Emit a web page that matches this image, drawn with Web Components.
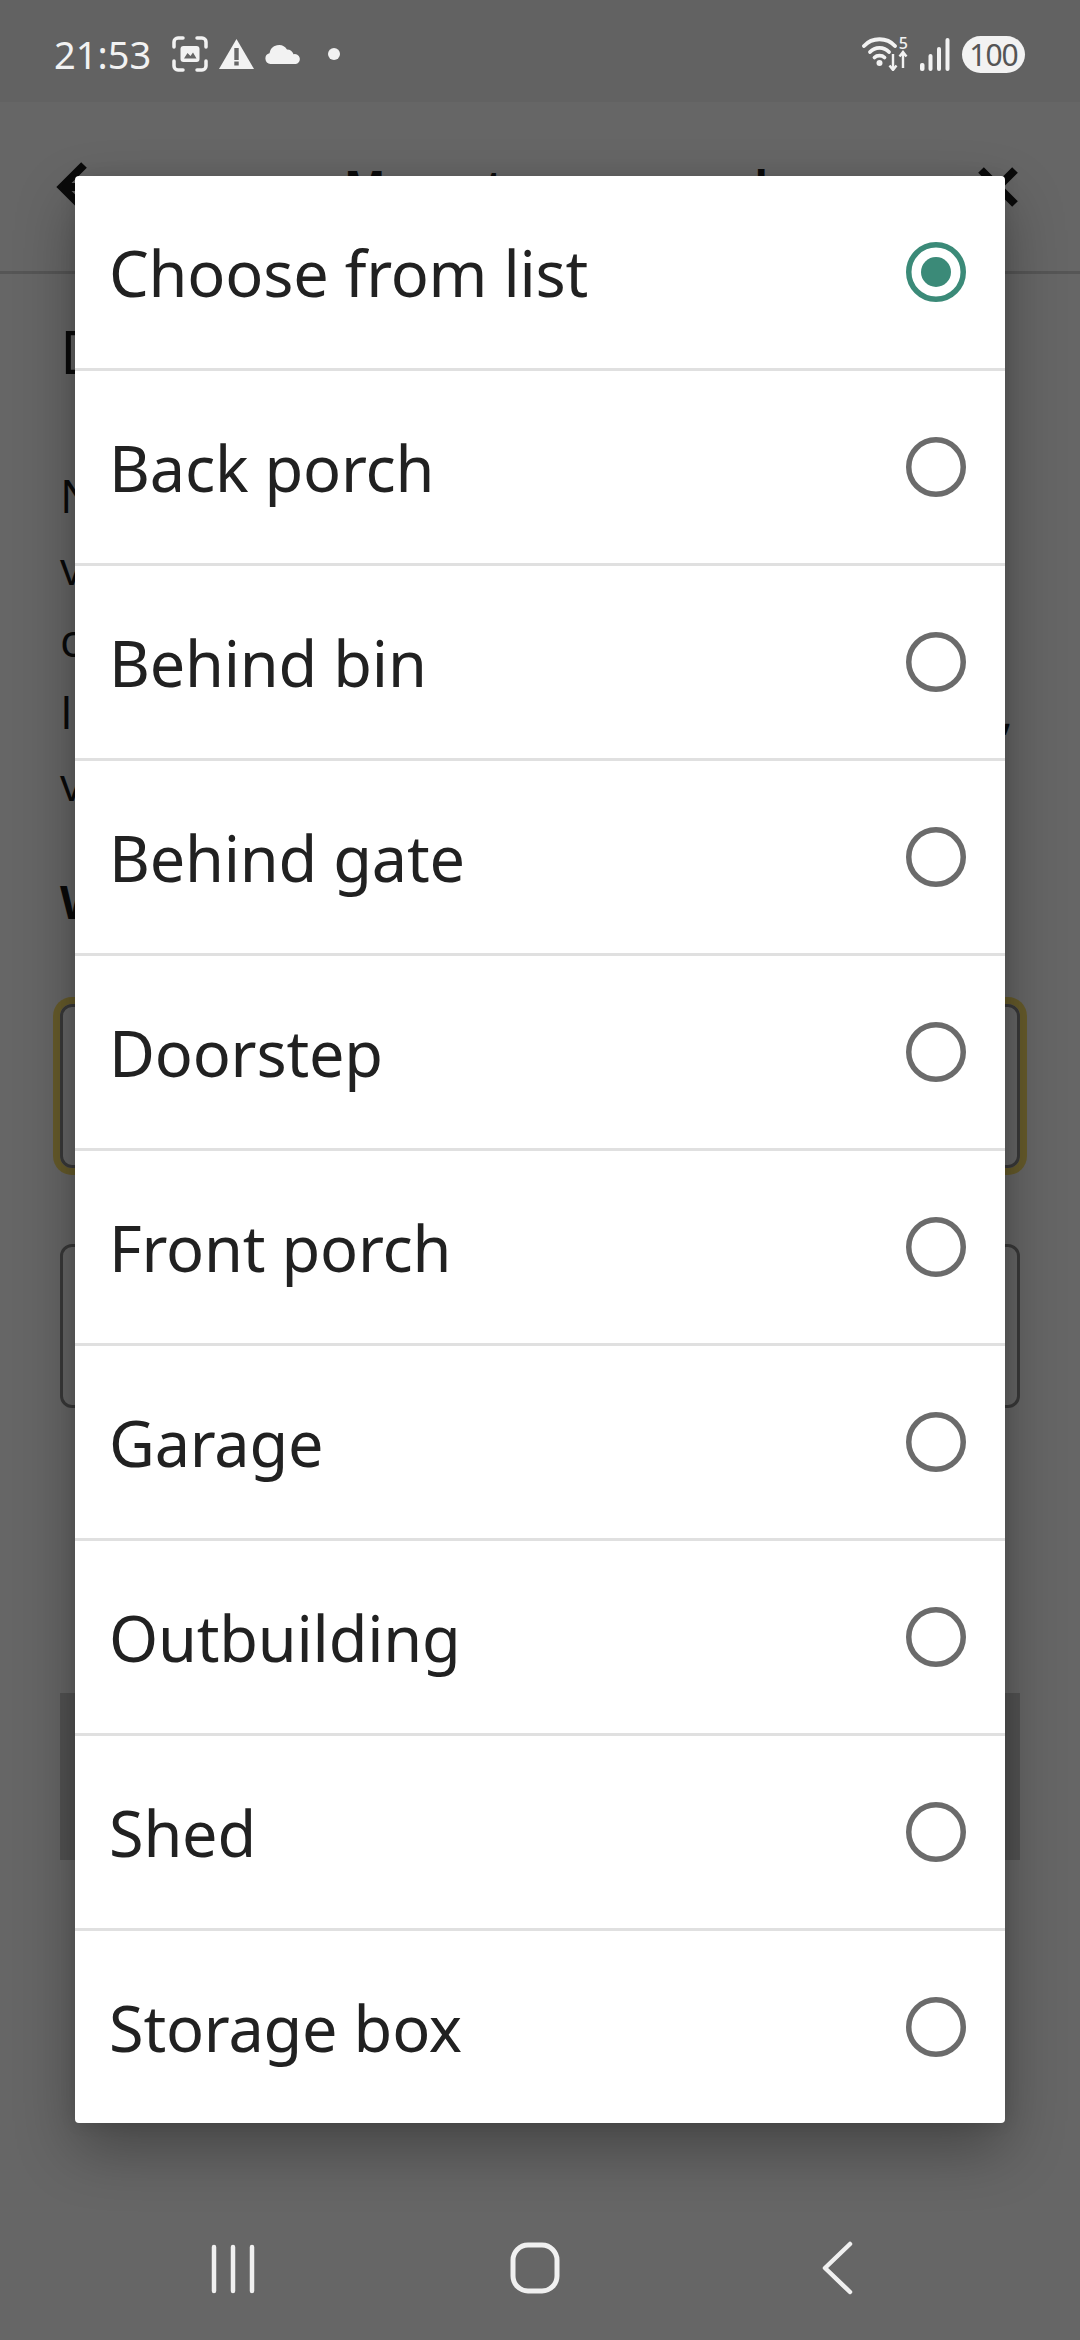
<!DOCTYPE html>
<html>
<head>
<meta charset="utf-8">
<title>Choose from list</title>
<style>
    html, body { margin: 0; padding: 0; background: #fff; }
</style>
</head>
<body>

<app-screen>
    <page-behind></page-behind>
    <dialog-scrim>
        <status-bar slot="top"></status-bar>
        <radio-list>
            <radio-row checked>Choose from list</radio-row>
            <radio-row>Back porch</radio-row>
            <radio-row>Behind bin</radio-row>
            <radio-row>Behind gate</radio-row>
            <radio-row>Doorstep</radio-row>
            <radio-row>Front porch</radio-row>
            <radio-row>Garage</radio-row>
            <radio-row>Outbuilding</radio-row>
            <radio-row>Shed</radio-row>
            <radio-row>Storage box</radio-row>
        </radio-list>
        <nav-bar slot="bottom"></nav-bar>
    </dialog-scrim>
</app-screen>

<script>
class AppScreen extends HTMLElement {
    constructor() {
        super();
        this.attachShadow({mode: 'open'}).innerHTML = `
        <style>
            :host {
                display: block;
                position: relative;
                width: 1080px;
                height: 2340px;
                overflow: hidden;
                background: #fff;
            }
        </style>
        <slot></slot>
        `;
    }
}

// the page under the scrim, nearly all of it hidden by the list
class PageBehind extends HTMLElement {
    constructor() {
        super();
        this.attachShadow({mode: 'open'}).innerHTML = `
        <style>
            :host {
                display: block;
                height: 2340px;
                font-family: "Open Sans", sans-serif;
                color: #1c1c1c;
            }
            .status { height: 102px; background: #f6f6f6; }
            header {
                height: 109px;
                border-bottom: 3px solid #d8d8d8;
                display: flex;
                align-items: flex-start;
                padding: 60px 60px 0 56px;
            }
            header svg { display: block; flex: none; }
            header span {
                font-size: 44px;
                font-weight: 700;
                letter-spacing: 2px;
                line-height: 60px;
                margin: -6px 0 0 244px;
                white-space: nowrap;
            }
            header svg:last-child { margin-left: auto; }
            main { padding: 0 60px; }
            .lead { font-size: 60px; line-height: 70px; margin-top: 42px; height: 70px; }
            .body { margin-top: 73px; font-size: 46px; line-height: 72px; display: flex; flex-direction: column; }
            .body div { display: flex; justify-content: space-between; height: 72px; padding-right: 7px; }
            .body b { font-weight: 400; }
            .q { font-size: 46px; font-weight: 700; line-height: 60px; margin-top: 52px; }
            .field {
                height: 164px;
                margin-top: 76px;
                box-sizing: border-box;
                border: 3px solid #8f8f8f;
                border-radius: 12px;
            }
            .field.focus {
                margin-top: 73px;
                box-shadow: 0 0 0 7px #ffe36c;
            }
            .btn { height: 167px; margin-top: 285px; background: #cfcfcf; }
        </style>
        <div class="status"></div>
        <header>
            <svg width="44" height="60" viewBox="0 0 44 60"><path d="M28 3 6 25l22 22M6 25H44" fill="none" stroke="#1c1c1c" stroke-width="8"/></svg>
            <span>Move to your pack</span>
            <svg width="44" height="60" viewBox="0 0 44 60"><path d="M5 8 39 42M39 8 5 42" fill="none" stroke="#1c1c1c" stroke-width="8"/></svg>
        </header>
        <main>
            <div class="lead">D</div>
            <div class="body">
                <div><b>N</b></div>
                <div><b>v</b></div>
                <div><b>c</b></div>
                <div><b>I</b><b>,</b></div>
                <div><b>v</b></div>
            </div>
            <div class="q">W</div>
            <div class="field focus"></div>
            <div class="field"></div>
            <div class="btn"></div>
        </main>
        `;
    }
}

class DialogScrim extends HTMLElement {
    constructor() {
        super();
        this.attachShadow({mode: 'open'}).innerHTML = `
        <style>
            :host {
                position: absolute;
                inset: 0;
                display: flex;
                flex-direction: column;
                background: rgba(0, 0, 0, 0.6);
            }
            .mid { flex: 1; padding: 74px 75px 0; }
        </style>
        <slot name="top"></slot>
        <div class="mid"><slot></slot></div>
        <slot name="bottom"></slot>
        `;
    }
}

class StatusBar extends HTMLElement {
    constructor() {
        super();
        this.attachShadow({mode: 'open'}).innerHTML = `
        <style>
            :host {
                display: flex;
                align-items: center;
                height: 102px;
                box-sizing: border-box;
                padding: 6px 55px 0 54px;
                font-family: "Noto Sans", sans-serif;
                color: #f2f2f2;
            }
            svg { display: block; flex: none; }
            .time { font-size: 38px; line-height: 44px; margin-right: 10px; }
            .left { display: flex; align-items: center; gap: 11px; flex: 1; }
            .right { display: flex; align-items: center; gap: 12px; }
            .wifi { position: relative; width: 46px; height: 34px; }
            .wifi span {
                position: absolute;
                top: 0;
                right: 0;
                font-size: 16px;
                font-weight: 500;
                line-height: 13px;
            }
            .batt {
                width: 63px;
                height: 37px;
                border-radius: 19px;
                background: #f2f2f2;
                color: #555;
                font-size: 30px;
                line-height: 37px;
                letter-spacing: -1px;
                text-align: center;
            }
        </style>
        <div class="left">
            <span class="time">21:53</span>
            <svg width="36" height="36" viewBox="0 0 36 36">
                <path d="M2 11V6a4 4 0 0 1 4-4h5M25 2h5a4 4 0 0 1 4 4v5M34 25v5a4 4 0 0 1-4 4h-5M11 34H6a4 4 0 0 1-4-4v-5" fill="none" stroke="#f2f2f2" stroke-width="3.500" stroke-linecap="round"/>
                <rect x="8.500" y="10" width="19" height="16" rx="3" fill="#f2f2f2"/>
                <path d="M12 22.500 15.500 17l3 3 2.500-3.500 3.500 6z" fill="#666"/>
            </svg>
            <svg width="35" height="30" viewBox="0 0 35 30">
                <path d="M17.500 0 35 30H0z" fill="#f2f2f2"/>
                <rect x="15.300" y="9" width="4.400" height="12" fill="#666"/>
                <rect x="15.300" y="22.500" width="4.400" height="4" fill="#666"/>
            </svg>
            <svg width="36" height="20" viewBox="0 0 36 20">
                <path d="M5.500 20A5.500 5.500 0 0 1 4.500 9.200 9.500 9.500 0 0 1 22 5.500 7 7 0 0 1 28.500 10.200 5 5 0 0 1 31 20z" fill="#f2f2f2"/>
            </svg>
            <svg width="12" height="12" viewBox="0 0 12 12" style="margin-left:16px"><circle cx="6" cy="6" r="6" fill="#f2f2f2"/></svg>
        </div>
        <div class="right">
            <div class="wifi">
                <svg width="46" height="34" viewBox="0 0 46 34">
                    <g fill="none" stroke="#f2f2f2" stroke-width="3.800" stroke-linecap="round">
                        <path d="M2 9C10 0 25 0 33 9"/>
                        <path d="M8 15C13 9.500 22 9.500 27 15"/>
                        <path d="M12.500 20.500C15 18 20 18 22.500 20.500"/>
                    </g>
                    <circle cx="17.500" cy="26" r="3" fill="#f2f2f2"/>
                    <g fill="none" stroke="#f2f2f2" stroke-width="2.400">
                        <path d="M31 17V33M27.500 28.500 31 33l3.500-4.500"/>
                        <path d="M41 31V15M37.500 19.500 41 15l3.500 4.500"/>
                    </g>
                </svg>
                <span>5</span>
            </div>
            <svg width="30" height="33" viewBox="0 0 30 33">
                <rect x="0" y="25" width="4.500" height="8" rx="2" fill="#f2f2f2"/>
                <rect x="8.500" y="16" width="4" height="17" rx="2" fill="#f2f2f2"/>
                <rect x="17" y="9" width="4" height="24" rx="2" fill="#f2f2f2"/>
                <rect x="25.500" y="0" width="4" height="33" rx="2" fill="#f2f2f2"/>
            </svg>
            <span class="batt">100</span>
        </div>
        `;
    }
}

class RadioList extends HTMLElement {
    constructor() {
        super();
        this.attachShadow({mode: 'open'}).innerHTML = `
        <style>
            :host {
                display: flex;
                flex-direction: column;
                background: #fff;
                border-radius: 4px;
                box-shadow: 0 26px 60px rgba(0, 0, 0, 0.32), 0 0 16px rgba(0, 0, 0, 0.1);
            }
        </style>
        <slot></slot>
        `;
    }
}

class RadioRow extends HTMLElement {
    constructor() {
        super();
        this.attachShadow({mode: 'open'}).innerHTML = `
        <style>
            :host {
                display: flex;
                align-items: center;
                justify-content: space-between;
                height: 192px;
                padding: 0 39px 0 34px;
                font-family: "Noto Sans", sans-serif;
                font-size: 63px;
                letter-spacing: -0.2px;
                color: #212121;
            }
            :host(:not(:last-child)) { box-shadow: 0 3px 0 #e0e0e0; margin-bottom: 3px; }
            svg { display: block; flex: none; }
        </style>
        <span><slot></slot></span>
        <svg width="60" height="60" viewBox="0 0 60 60"></svg>
        `;
        let color = this.hasAttribute('checked') ? '#3b8a78' : '#6b6b6b';
        let dot = this.hasAttribute('checked') ? `<circle cx="30" cy="30" r="15" fill="${color}"/>` : '';
        this.shadowRoot.querySelector('svg').innerHTML =
            `<circle cx="30" cy="30" r="27.250" fill="none" stroke="${color}" stroke-width="5.500"/>${dot}`;
    }
}

class NavBar extends HTMLElement {
    constructor() {
        super();
        this.attachShadow({mode: 'open'}).innerHTML = `
        <style>
            :host {
                display: block;
                height: 140px;
            }
            svg { display: block; }
        </style>
        <svg width="1080" height="140" viewBox="0 0 1080 140">
            <g fill="none" stroke="#f0f0f0" stroke-width="4.500" stroke-linecap="round">
                <path d="M214 47V91M233 47V91M252 47V91"/>
                <rect x="513" y="45" width="44" height="46" rx="15" stroke-width="5"/>
                <path d="M850 44 825 68 850 92" stroke-linejoin="round"/>
            </g>
        </svg>
        `;
    }
}

customElements.define('app-screen', AppScreen);
customElements.define('page-behind', PageBehind);
customElements.define('dialog-scrim', DialogScrim);
customElements.define('status-bar', StatusBar);
customElements.define('radio-list', RadioList);
customElements.define('radio-row', RadioRow);
customElements.define('nav-bar', NavBar);
</script>
</body>
</html>
